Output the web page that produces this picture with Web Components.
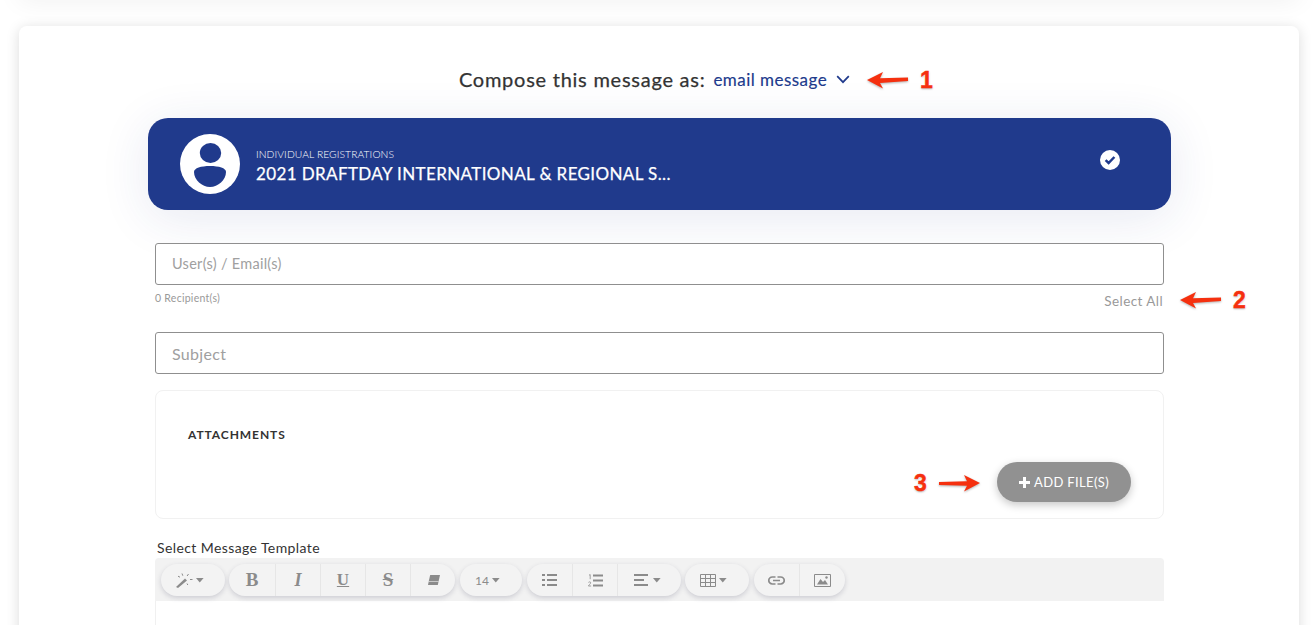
<!DOCTYPE html>
<html lang="en"><head><meta charset="utf-8"><title>Compose</title>
<style>
html,body{margin:0;padding:0;height:625px;overflow:hidden;background:#fff;font-family:Lato,"Open Sans",sans-serif}
</style></head><body>
<x-page>
  <x-card>
    <x-compose-title label="Compose this message as:" value="email message"></x-compose-title>
    <x-banner kicker="INDIVIDUAL REGISTRATIONS" title="2021 DRAFTDAY INTERNATIONAL &amp; REGIONAL S..."></x-banner>
    <x-form>
      <x-field placeholder="User(s) / Email(s)" small></x-field>
      <x-meta left="0 Recipient(s)" right="Select All"></x-meta>
      <x-field placeholder="Subject"></x-field>
      <x-attachments></x-attachments>
      <x-editor label="Select Message Template"></x-editor>
    </x-form>
    <x-annot n="1" dir="left" style="left:848px;top:42px"></x-annot>
    <x-annot n="2" dir="left" style="left:1161px;top:262px"></x-annot>
    <x-annot n="3" dir="right" style="left:895px;top:445px"></x-annot>
  </x-card>
</x-page>
<script>
function def(name,css,html){
  customElements.define(name,class extends HTMLElement{
    connectedCallback(){
      if(this.shadowRoot)return;
      const r=this.attachShadow({mode:'open'});
      r.innerHTML='<style>'+css+'</style>'+(typeof html==='function'?html(this):html);
    }
  });
}
const a=(e,n)=>e.getAttribute(n)||'';
def('x-page',`:host{display:block;position:relative;height:625px;box-sizing:border-box;padding:26px 16px 0 19px;overflow:hidden;background:#fff}
:host::before{content:"";position:absolute;left:19px;right:16px;top:-20px;height:20px;box-shadow:0 0 26px rgba(0,0,0,.07)}`,`<slot></slot>`);
def('x-card',`:host{display:block;position:relative;height:700px;box-sizing:border-box;background:#fff;border-radius:8px;padding:41px 0 0 129px;box-shadow:0 2px 14px rgba(0,0,0,.14)}`,`<slot></slot>`);
def('x-compose-title',`:host{display:flex;justify-content:center;align-items:center;width:1023px;height:25px;box-sizing:border-box;padding-right:10px;color:#333;white-space:nowrap}
.l{font-size:20px;line-height:24px;margin-bottom:2px;letter-spacing:.75px;-webkit-text-stroke:.25px #333}
.v{font-size:17px;color:#203a8c;margin-left:8px;letter-spacing:.46px;-webkit-text-stroke:.15px #203a8c}
svg{margin-left:9px}`,e=>`<span class="l">${a(e,'label')}</span><span class="v">${a(e,'value')}</span><svg width="14" height="9" viewBox="0 0 14 9"><path d="M1.200 1.200 7 7.200l5.800-6" fill="none" stroke="#203a8c" stroke-width="1.700"/></svg>`);
def('x-banner',`:host{display:flex;align-items:center;width:1023px;height:92px;margin-top:26px;background:#203a8c;border-radius:20px;box-sizing:border-box;padding:0 51px 0 32px;color:#fff;box-shadow:0 8px 50px rgba(32,58,140,.11)}
.av{flex:none;width:60px;height:60px;margin-right:16px}
.t{flex:1;min-width:0;display:flex;flex-direction:column;padding-top:5px}
.k{font-size:10.300px;line-height:13px;letter-spacing:.08px;color:#fff;font-weight:300}
.h{font-size:17px;line-height:24px;letter-spacing:.38px;margin-top:1px;white-space:nowrap;-webkit-text-stroke:.25px #fff}
.c{margin-bottom:8px}`,
e=>`<svg class="av" viewBox="0 0 60 60"><circle cx="30" cy="30" r="30" fill="#fff"/><ellipse cx="30.500" cy="19" rx="10.700" ry="10" fill="#203a8c"/><path d="M14 38c0-4 7-6 16-6s16 2 16 6c0 8-8 15-16 15s-16-7-16-15z" fill="#203a8c"/></svg><div class="t"><span class="k">${a(e,'kicker')}</span><span class="h">${a(e,'title')}</span></div><svg class="c" width="20" height="20" viewBox="0 0 20 20"><circle cx="10" cy="10" r="10" fill="#fff"/><path d="M5.600 10.200 8.600 13l5.800-6" fill="none" stroke="#203a8c" stroke-width="2.500"/></svg>`);
def('x-form',`:host{display:flex;flex-direction:column;width:1009px;margin:33px 0 0 7px}`,`<slot></slot>`);
def('x-field',`:host{display:flex;align-items:center;height:42px;box-sizing:border-box;border:1px solid #8f8f8f;border-radius:3px;padding:0 16px;background:#fff;color:#a0a0a0;font-size:16px;letter-spacing:.3px}
:host([small]){font-size:14.500px;letter-spacing:.28px;padding-bottom:2px}`,e=>`<span>${a(e,'placeholder')}</span>`);
def('x-meta',`:host{display:flex;justify-content:space-between;height:47px;color:#999;padding-right:1px}
.l{font-size:10.500px;letter-spacing:.27px;margin-top:7px;line-height:13px}
.r{font-size:13.500px;letter-spacing:.42px;margin-top:8px;line-height:17px}`,e=>`<span class="l">${a(e,'left')}</span><span class="r">${a(e,'right')}</span>`);
def('x-attachments',`:host{display:block;position:relative;height:129px;margin-top:16px;box-sizing:border-box;border:1px solid #f1f1f1;border-radius:8px;padding:36px 32px 0}
.h{font-size:12px;font-weight:700;letter-spacing:.92px;color:#333;line-height:16px}
.row{display:flex;justify-content:flex-end;margin-top:19px}
.b{display:flex;align-items:center;justify-content:center;width:134px;height:40px;border-radius:20px;background:#919191;color:#fff;font-size:13px;letter-spacing:.35px;box-shadow:0 3px 8px rgba(0,0,0,.22)}
svg{margin-right:4px}`,`<div class="h">ATTACHMENTS</div><div class="row"><div class="b"><svg width="11" height="11" viewBox="0 0 11 11"><path d="M4 0h3v4h4v3H7v4H4V7H0V4h4z" fill="#fff"/></svg>ADD FILE(S)</div></div>`);
const G='#8b8b8b';
const caret=`<svg width="8" height="5" viewBox="0 0 8 5" style="margin-left:3px"><path d="M0 0h7.600L3.800 4.600z" fill="${G}"/></svg>`;
def('x-tb-group',`:host{display:flex;height:32px;border-radius:16px;background:#f3f3f3;box-shadow:0 2px 5px rgba(60,60,90,.2);overflow:hidden}`,`<slot></slot>`);
def('x-tb-btn',`:host{display:flex;align-items:center;justify-content:center;width:45px;height:32px;box-sizing:border-box;color:${G};border-left:1px solid #e6e6e6}
:host(:first-child){border-left:0}
:host([w="64"]){width:64px}`,`<slot></slot>`);
def('x-editor',`:host{display:block;margin-top:21px}
.lab{font-size:14px;line-height:15px;height:17px;margin:0 0 0 2px;color:#333;letter-spacing:.4px}
.tb{display:flex;gap:4px;margin-top:1px;height:43px;box-sizing:border-box;padding:6px 0 0 6px;background:#f2f2f2;border-radius:4px 4px 0 0;font-family:"Liberation Serif",serif}
.body{height:60px;border-left:1px solid #f0f0f0;background:#fff}
.g2{margin-left:1px}
.b{font-size:19px;font-weight:700}.i{font-size:18px;font-style:italic;font-weight:700}
.u{font-size:17px;font-weight:700;text-decoration:underline}
.s{font-size:19px;font-weight:700;text-decoration:line-through}
.n{font:12px Lato,sans-serif}`,e=>`<div class="lab">${a(e,'label')}</div><div class="tb">
<x-tb-group style="width:64px"><x-tb-btn w="64" style="padding-right:8px"><svg width="18" height="16" viewBox="0 0 18 16"><path d="M1 15 10 6.500l2 2L3 16z" fill="${G}"/><path d="M7 1.500l.8 2.200M3 4.200l2 1M13.500 2l-1.400 2M15 7.500h2.500M12 11.500l.8 1.500" stroke="${G}" fill="none"/></svg>${caret}</x-tb-btn></x-tb-group>
<x-tb-group style="width:226px"><x-tb-btn style="width:46px"><span class="b">B</span></x-tb-btn><x-tb-btn><span class="i">I</span></x-tb-btn><x-tb-btn><span class="u">U</span></x-tb-btn><x-tb-btn><span class="s">S</span></x-tb-btn><x-tb-btn><svg width="13" height="10" viewBox="0 0 13 10"><path d="M3.200 0H13l-2.200 10H1L2 5z" fill="${G}"/><path d="M1.600 6.500h10" stroke="#f3f3f3" stroke-width=".6"/></svg></x-tb-btn></x-tb-group>
<x-tb-group class="g2" style="width:62px"><x-tb-btn style="width:62px;padding-right:7px"><span class="n">14</span>${caret}</x-tb-btn></x-tb-group>
<x-tb-group class="g2" style="width:154px"><x-tb-btn><svg width="15" height="12" viewBox="0 0 15 12"><path d="M0 0h3v2H0zM5 0h10v2H5zM0 5h3v2H0zM5 5h10v2H5zM0 10h3v2H0zM5 10h10v2H5z" fill="${G}"/></svg></x-tb-btn><x-tb-btn><svg width="15" height="13" viewBox="0 0 15 13"><path d="M5 0.500h10v2H5zM5 5.500h10v2H5zM5 10.500h10v2H5z" fill="${G}"/><path d="M1 1.200 2.200.6V5.200M.4 8.500c.6-1 2.600-.8 2.300.5-.2.8-1.600 1.700-2.300 3h2.700" stroke="${G}" fill="none" stroke-width=".8"/></svg></x-tb-btn><x-tb-btn w="64" style="padding-right:5px"><svg width="14" height="12" viewBox="0 0 14 12"><path d="M0 0h14v2H0zM0 5h10v2H0zM0 10h14v2H0z" fill="${G}"/></svg><span style="width:2px"></span>${caret}</x-tb-btn></x-tb-group>
<x-tb-group style="width:64px"><x-tb-btn w="64" style="padding-right:7px"><svg width="16" height="13" viewBox="0 0 16 13"><path d="M.5.5h15v12H.5zM.5 4.500h15M.5 8.500h15M5.500.5v12M10.500.5v12" fill="none" stroke="${G}"/></svg>${caret}</x-tb-btn></x-tb-group>
<x-tb-group class="g2" style="width:91px"><x-tb-btn><svg width="17" height="9" viewBox="0 0 17 9"><path d="M7.500 1H4.300a3.500 3.500 0 0 0 0 7h3.200M9.500 1h3.200a3.500 3.500 0 0 1 0 7H9.500M5 4.500h7" fill="none" stroke="${G}" stroke-width="1.700"/></svg></x-tb-btn><x-tb-btn style="width:46px"><svg width="17" height="13" viewBox="0 0 17 13"><path d="M.5.500h16v12H.5z" fill="none" stroke="${G}"/><path d="M3 10.500 6.500 5 9 8l2-2 3 4.500z" fill="${G}"/><circle cx="12.500" cy="3.500" r="1.200" fill="${G}"/></svg></x-tb-btn></x-tb-group>
</div><div class="body"></div>`);
const fl='filter:drop-shadow(0 1px 1px rgba(0,0,0,.3))';
const arrowL=`<svg width="42" height="18" viewBox="0 0 42 18" style="${fl}"><path d="M0 9 16 1 13 7.200 41 6.500v3.500L13 12l3 5.500z" fill="#f5300f"/></svg>`;
const arrowR=`<svg width="42" height="18" viewBox="0 0 42 18" style="${fl}"><path d="M42 9 26 1l3 6.200L1 8v3l28 .8-3 5.700z" fill="#f5300f"/></svg>`;
def('x-annot',`:host{position:absolute;display:flex;align-items:center;gap:11px}
.n{font:700 23px/24px "Liberation Sans",sans-serif;color:#f5300f;-webkit-text-stroke:.5px #f5300f;text-shadow:1px 0 1px #fff,-1px 0 1px #fff,0 -1px 1px #fff,0 1px 2px rgba(0,0,0,.35)}`,
e=>a(e,'dir')==='left'?`${arrowL}<span class="n">${a(e,'n')}</span>`:`<span class="n">${a(e,'n')}</span>${arrowR}`);
</script>
</body></html>
